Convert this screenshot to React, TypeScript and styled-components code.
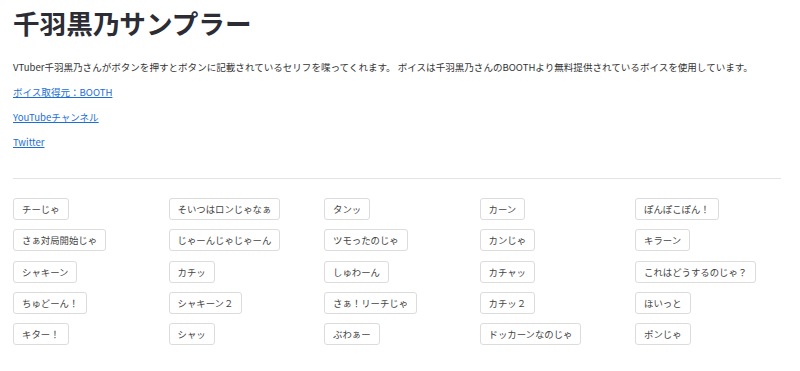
import React from 'react';
import styled, { createGlobalStyle } from 'styled-components';

const voices = [
  'チーじゃ', 'そいつはロンじゃなぁ', 'タンッ', 'カーン', 'ぽんぽこぽん！',
  'さぁ対局開始じゃ', 'じゃーんじゃじゃーん', 'ツモったのじゃ', 'カンじゃ', 'キラーン',
  'シャキーン', 'カチッ', 'しゅわーん', 'カチャッ', 'これはどうするのじゃ？',
  'ちゅどーん！', 'シャキーン２', 'さぁ！リーチじゃ', 'カチッ２', 'ほいっと',
  'キター！', 'シャッ', 'ぶわぁー', 'ドッカーンなのじゃ', 'ポンじゃ',
];

const GlobalStyle = createGlobalStyle`
  body {
    margin: 0;
    background: #fff;
    font-family: "Noto Sans CJK JP", "Noto Sans", sans-serif;
  }
`;

const Page = styled.div`
  padding: 7px 19px 0 13px;
`;

const Title = styled.h1`
  margin: 0 0 22px;
  font-size: 26.6px;
  line-height: 31px;
  font-weight: 700;
  color: #2c2c35;
`;

const Text = styled.p`
  margin: 0 0 11px;
  font-size: 9.55px;
  line-height: 14px;
  color: #333;
`;

const Link = styled.a`
  color: #1b6ed6;
  text-decoration: underline;
`;

const Rule = styled.hr`
  margin: 29px 0 19px;
  border: 0;
  border-top: 1px solid #e3e3e3;
`;

const Grid = styled.div`
  display: grid;
  grid-template-columns: repeat(5, 1fr);
  column-gap: 9.5px;
  row-gap: 9.3px;
`;

const VoiceButton = styled.button`
  justify-self: start;
  padding: 3px 8px;
  font-family: inherit;
  font-size: 9.4px;
  line-height: 14px;
  color: #444;
  background: #fff;
  border: 1px solid #dcdcdc;
  border-radius: 3px;
  cursor: pointer;
`;

export default function App() {
  return (
    <>
      <GlobalStyle />
      <Page>
        <Title>千羽黒乃サンプラー</Title>
        <Text>
          VTuber千羽黒乃さんがボタンを押すとボタンに記載されているセリフを喋ってくれます。
          ボイスは千羽黒乃さんのBOOTHより無料提供されているボイスを使用しています。
        </Text>
        <Text>
          <Link href="#">ボイス取得元：BOOTH</Link>
        </Text>
        <Text>
          <Link href="#">YouTubeチャンネル</Link>
        </Text>
        <Text>
          <Link href="#">Twitter</Link>
        </Text>
        <Rule />
        <Grid>
          {voices.map((v) => (
            <VoiceButton key={v}>{v}</VoiceButton>
          ))}
        </Grid>
      </Page>
    </>
  );
}
